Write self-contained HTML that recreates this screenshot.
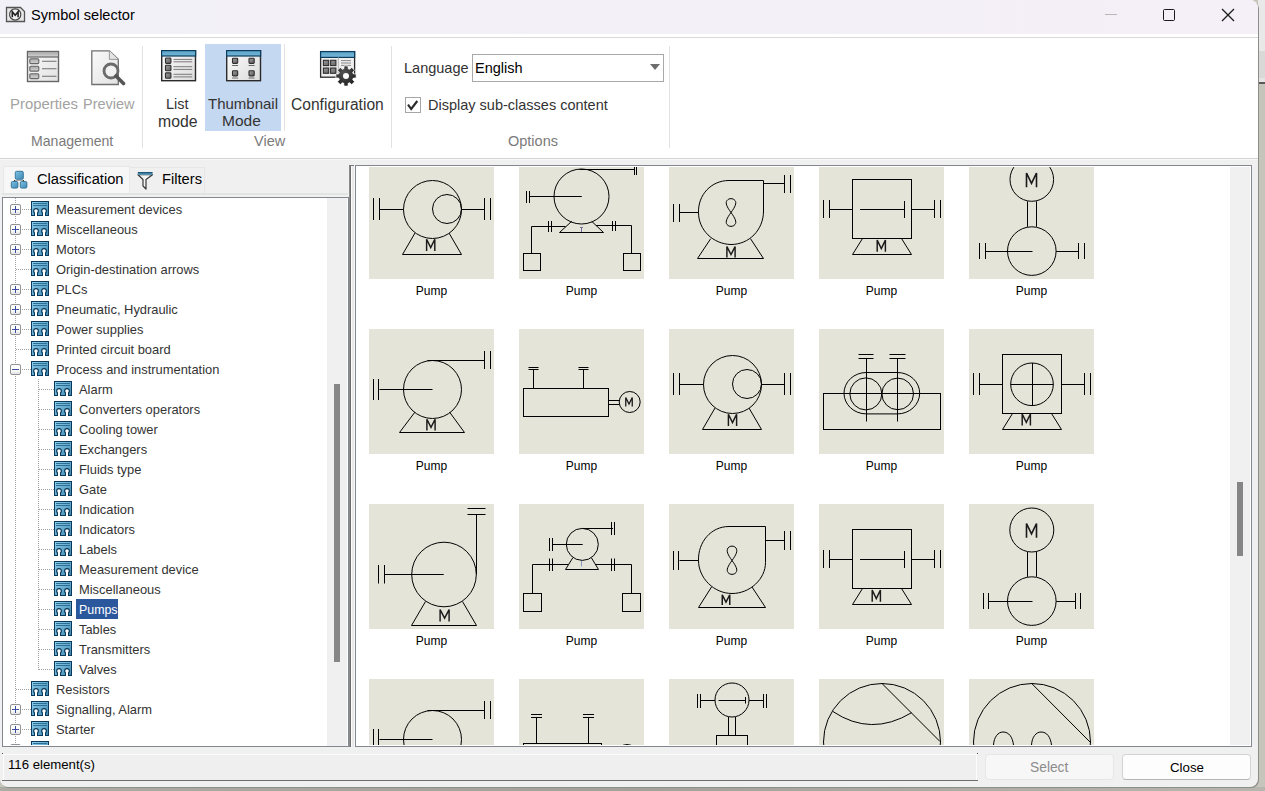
<!DOCTYPE html><html><head><meta charset="utf-8"><style>
*{margin:0;padding:0;box-sizing:border-box}
html,body{width:1265px;height:791px;overflow:hidden;background:#c5c5bb;font-family:"Liberation Sans",sans-serif}
.a{position:absolute}
.t{position:absolute;white-space:nowrap;line-height:1}
.sep{position:absolute;width:1px;background:#e2e2e2}
.rtxt{font-size:14.5px;color:#333}
.gtxt{font-size:14.5px;color:#7a7a7a}
.tr{position:absolute;white-space:nowrap;line-height:1;font-size:12.9px;color:#333}
.th{position:absolute;width:125px;height:125px;background:#e4e4d9}
.th svg{position:absolute;left:0;top:0}
.pl{position:absolute;width:125px;text-align:center;font-size:12px;line-height:1;color:#000}
</style></head><body>
<div class="a" style="left:1258px;top:0;width:7px;height:51px;background:#e9e9e9"></div>
<div class="a" style="left:1258px;top:51px;width:7px;height:27px;background:#d9d9d9"></div>
<div class="a" style="left:1258px;top:78px;width:7px;height:4px;background:#e5e5e5"></div>
<div class="a" style="left:1258px;top:82px;width:7px;height:2px;background:#5a5a5a"></div>
<div class="a" style="left:0;top:787px;width:1265px;height:4px;background:linear-gradient(to right,#acaca4,#a2a29a 50%,#b6b6ae)"></div>
<div class="a" style="left:0;top:0;width:1258px;height:787px;background:#f0f0f0;border-radius:0 8px 8px 8px;overflow:hidden;box-shadow:1px 1px 0 #8e8e88">
<div class="a" style="left:0;top:0;width:1258px;height:34px;background:linear-gradient(to right,#f2f1f7 0%,#f3f0f7 55%,#f5eff7 100%)"></div>
<div class="a" style="left:0;top:34px;width:1258px;height:125px;background:#fff;border-bottom:1px solid #d4d4d4"></div>
<div class="a" style="left:0;top:159px;width:1258px;height:1px;background:#f7f7f7"></div>
<div class="a" style="left:0;top:37px;width:1258px;height:1px;background:#d9d9d9"></div>
<svg class="a" style="left:5px;top:6px" width="21" height="17" viewBox="0 0 21 17">
<path d="M1.5 1.5H15.5L19.5 5.5V15.5H1.5Z" fill="#e8e8e8" stroke="#555" stroke-width="1.3"/>
<circle cx="10.2" cy="8.5" r="5.6" fill="#f2f2f2" stroke="#444" stroke-width="1.2"/>
<path d="M7.3 11.3V5.8L10.2 9.3L13.1 5.8V11.3" fill="none" stroke="#222" stroke-width="1.6"/>
</svg>
<div class="t" style="left:31px;top:8px;font-size:14.6px;color:#000">Symbol selector</div>
<div class="a" style="left:1105px;top:14px;width:12px;height:1px;background:#b8b8b8"></div>
<div class="a" style="left:1163px;top:9px;width:12px;height:12px;border:1.3px solid #1a1a1a;border-radius:1.5px"></div>
<svg class="a" style="left:1221px;top:8px" width="14" height="14"><path d="M1 1L13 13M13 1L1 13" stroke="#1a1a1a" stroke-width="1.3"/></svg>
<div class="sep" style="left:142px;top:46px;height:102px"></div>
<div class="sep" style="left:284px;top:44px;height:87px"></div>
<div class="sep" style="left:391px;top:46px;height:102px"></div>
<div class="sep" style="left:669px;top:46px;height:102px"></div>
<div class="a" style="left:205px;top:44px;width:76px;height:87px;background:#c5d8f2"></div>
<svg class="a" style="left:26px;top:50px" width="34" height="33" viewBox="0 0 34 33">
<defs><linearGradient id="gh" x1="0" y1="0" x2="0" y2="1"><stop offset="0" stop-color="#a8a8a8"/><stop offset="1" stop-color="#d4d4d4"/></linearGradient>
<linearGradient id="gb" x1="0" y1="0" x2="1" y2="1"><stop offset="0" stop-color="#fafafa"/><stop offset="1" stop-color="#e2e2e2"/></linearGradient></defs>
<rect x="1.5" y="1.5" width="31" height="30" fill="url(#gb)" stroke="#666" stroke-width="1.4"/>
<rect x="2" y="2" width="30" height="5" fill="url(#gh)"/><path d="M1.5 7H32.5" stroke="#666" stroke-width="1.2"/>
<rect x="3.8" y="8.8" width="9" height="4.8" rx="1" fill="url(#gh)" stroke="#666" stroke-width="1.1"/>
<rect x="3.8" y="16.3" width="9" height="4.8" rx="1" fill="url(#gh)" stroke="#666" stroke-width="1.1"/>
<rect x="3.8" y="23.8" width="9" height="4.8" rx="1" fill="url(#gh)" stroke="#666" stroke-width="1.1"/>
<path d="M16 11.3H30.5M16 18.8H30.5M16 26.3H30.5" stroke="#707070" stroke-width="1.1"/>
</svg>
<svg class="a" style="left:90px;top:49px" width="36" height="37" viewBox="0 0 36 37">
<path d="M1.8 1.8H19.4L28.3 10.4V35.5H1.8Z" fill="url(#gb)" stroke="#707070" stroke-width="1.3"/>
<path d="M19.4 1.8V10.4H28.3" fill="#e4e4e4" stroke="#999" stroke-width="1"/>
<circle cx="21" cy="22" r="7" fill="#f0f0f0" stroke="#6a6a6a" stroke-width="2.8"/>
<path d="M26 27L33.5 34.5" stroke="#555" stroke-width="3.6" stroke-linecap="round"/>
</svg>
<svg class="a" style="left:161px;top:50px" width="36" height="32" viewBox="0 0 36 32">
<defs><linearGradient id="bh161" x1="0" y1="0" x2="0" y2="1"><stop offset="0" stop-color="#5ba4c9"/><stop offset="1" stop-color="#74b6d6"/></linearGradient>
<linearGradient id="bb161" x1="0" y1="0" x2="1" y2="1"><stop offset="0" stop-color="#fbfbfb"/><stop offset="1" stop-color="#dcdcdc"/></linearGradient>
<linearGradient id="sq161" x1="0" y1="0" x2="1" y2="1"><stop offset="0" stop-color="#a0a0a0"/><stop offset="1" stop-color="#5e5e5e"/></linearGradient></defs>
<rect x="0.7" y="0.7" width="33.8" height="30" fill="url(#bb161)" stroke="#2a2a2a" stroke-width="1.4"/>
<rect x="0.6" y="0.6" width="34" height="5.4" fill="url(#bh161)" stroke="#0b3d5e" stroke-width="1.2"/>
<rect x="4.5" y="8" width="5.4" height="5.4" rx="0.8" fill="url(#sq161)" stroke="#2e2e2e" stroke-width="1.1"/><rect x="4.5" y="15.3" width="5.4" height="5.4" rx="0.8" fill="url(#sq161)" stroke="#2e2e2e" stroke-width="1.1"/><rect x="4.5" y="22.9" width="5.4" height="5.4" rx="0.8" fill="url(#sq161)" stroke="#2e2e2e" stroke-width="1.1"/><path d="M12.5 9.4H31.2" stroke="#7a7a7a" stroke-width="1"/><path d="M12.5 11.8H31.2" stroke="#7a7a7a" stroke-width="1"/><path d="M12.5 16.7H31.2" stroke="#7a7a7a" stroke-width="1"/><path d="M12.5 19.4H31.2" stroke="#7a7a7a" stroke-width="1"/><path d="M12.5 24.3H31.2" stroke="#7a7a7a" stroke-width="1"/><path d="M12.5 26.9H31.2" stroke="#7a7a7a" stroke-width="1"/></svg>
<svg class="a" style="left:226px;top:50px" width="36" height="32" viewBox="0 0 36 32">
<defs><linearGradient id="bh226" x1="0" y1="0" x2="0" y2="1"><stop offset="0" stop-color="#5ba4c9"/><stop offset="1" stop-color="#74b6d6"/></linearGradient>
<linearGradient id="bb226" x1="0" y1="0" x2="1" y2="1"><stop offset="0" stop-color="#fbfbfb"/><stop offset="1" stop-color="#dcdcdc"/></linearGradient>
<linearGradient id="sq226" x1="0" y1="0" x2="1" y2="1"><stop offset="0" stop-color="#a0a0a0"/><stop offset="1" stop-color="#5e5e5e"/></linearGradient></defs>
<rect x="0.7" y="0.7" width="33.8" height="30" fill="url(#bb226)" stroke="#2a2a2a" stroke-width="1.4"/>
<rect x="0.6" y="0.6" width="34" height="5.4" fill="url(#bh226)" stroke="#0b3d5e" stroke-width="1.2"/>
<rect x="6.5" y="8.2" width="5.2" height="5.2" rx="0.8" fill="url(#sq226)" stroke="#2e2e2e" stroke-width="1.1"/><path d="M6.1 15.5H12.1" stroke="#6a6a6a" stroke-width="1"/><rect x="6.5" y="20.7" width="5.2" height="5.2" rx="0.8" fill="url(#sq226)" stroke="#2e2e2e" stroke-width="1.1"/><path d="M6.1 28.0H12.1" stroke="#6a6a6a" stroke-width="1"/><rect x="23" y="8.2" width="5.2" height="5.2" rx="0.8" fill="url(#sq226)" stroke="#2e2e2e" stroke-width="1.1"/><path d="M22.6 15.5H28.6" stroke="#6a6a6a" stroke-width="1"/><rect x="23" y="20.7" width="5.2" height="5.2" rx="0.8" fill="url(#sq226)" stroke="#2e2e2e" stroke-width="1.1"/><path d="M22.6 28.0H28.6" stroke="#6a6a6a" stroke-width="1"/></svg>
<svg class="a" style="left:319px;top:50px" width="40" height="38" viewBox="0 0 40 38">
<defs><linearGradient id="ch" x1="0" y1="0" x2="0" y2="1"><stop offset="0" stop-color="#5aa3c8"/><stop offset="1" stop-color="#78b9d8"/></linearGradient>
<linearGradient id="cs" x1="0" y1="0" x2="1" y2="1"><stop offset="0" stop-color="#9a9a9a"/><stop offset="1" stop-color="#606060"/></linearGradient>
<radialGradient id="cg" cx="0.4" cy="0.35" r="0.7"><stop offset="0" stop-color="#555"/><stop offset="1" stop-color="#1e1e1e"/></radialGradient></defs>
<rect x="1.6" y="1.6" width="34" height="25.6" fill="#efefef" stroke="#2a2a2a" stroke-width="1.3"/>
<rect x="1.6" y="1.6" width="34" height="5.8" fill="url(#ch)" stroke="#0b3d5e" stroke-width="1.2"/>
<path d="M19.4 7.5V27.5" stroke="#bbb" stroke-width="1.2"/>
<rect x="4.4" y="10.3" width="5.3" height="5.3" fill="url(#cs)" stroke="#2e2e2e" stroke-width="1.1"/>
<rect x="11.6" y="10.3" width="5.3" height="5.3" fill="url(#cs)" stroke="#2e2e2e" stroke-width="1.1"/>
<rect x="4.4" y="18" width="5.3" height="5.3" fill="url(#cs)" stroke="#2e2e2e" stroke-width="1.1"/>
<rect x="11.6" y="18" width="5.3" height="5.3" fill="url(#cs)" stroke="#2e2e2e" stroke-width="1.1"/>
<path d="M22 10.6H32M22 13H32M22 15.4H32" stroke="#888" stroke-width="1"/>
<g transform="translate(27,26)">
<path fill="url(#cg)" d="M-2.12 -7.30L-2.01 -10.10L2.01 -10.10L2.12 -7.30L3.66 -6.66L5.72 -8.56L8.56 -5.72L6.66 -3.66L7.30 -2.12L10.10 -2.01L10.10 2.01L7.30 2.12L6.66 3.66L8.56 5.72L5.72 8.56L3.66 6.66L2.12 7.30L2.01 10.10L-2.01 10.10L-2.12 7.30L-3.66 6.66L-5.72 8.56L-8.56 5.72L-6.66 3.66L-7.30 2.12L-10.10 2.01L-10.10 -2.01L-7.30 -2.12L-6.66 -3.66L-8.56 -5.72L-5.72 -8.56L-3.66 -6.66Z" stroke="#fff" stroke-width="0.7" stroke-linejoin="round"/>
<circle cx="0" cy="0" r="3" fill="#fff"/>
</g>
</svg>
<div class="t rtxt" style="left:10px;top:97px;color:#a3a3a3;font-size:14.9px">Properties</div>
<div class="t rtxt" style="left:83px;top:97px;color:#a3a3a3">Preview</div>
<div class="t gtxt" style="left:31px;top:134px;font-size:14.1px">Management</div>
<div class="t rtxt" style="left:166px;top:97px">List</div>
<div class="t rtxt" style="left:158px;top:114px;font-size:15.8px">mode</div>
<div class="t rtxt" style="left:208px;top:96px;font-size:15px">Thumbnail</div>
<div class="t rtxt" style="left:222px;top:113px;font-size:15.5px">Mode</div>
<div class="t gtxt" style="left:254px;top:134px">View</div>
<div class="t rtxt" style="left:291px;top:97px;font-size:15.6px">Configuration</div>
<div class="t rtxt" style="left:404px;top:61px">Language</div>
<div class="a" style="left:472px;top:54px;width:192px;height:28px;border:1px solid #a9a9a9;background:#fff"></div>
<div class="t rtxt" style="left:475px;top:61px;color:#000">English</div>
<div class="a" style="left:650px;top:64px;width:0;height:0;border-left:5px solid transparent;border-right:5px solid transparent;border-top:6px solid #6d6d6d"></div>
<div class="a" style="left:405px;top:97px;width:16px;height:16px;border:1px solid #a6a6a6;background:#fff"></div>
<svg class="a" style="left:405px;top:97px" width="16" height="16"><path d="M3 7.6 L6.2 12 L12.3 4" fill="none" stroke="#2a2a2a" stroke-width="2.1"/></svg>
<div class="t rtxt" style="left:428px;top:98px">Display sub-classes content</div>
<div class="t gtxt" style="left:508px;top:134px">Options</div>
<div class="a" style="left:3px;top:166px;width:127px;height:27px;background:#f7f7f7;border:1px solid #e8e8e8;border-bottom:none"></div>
<div class="a" style="left:130px;top:167px;width:75px;height:26px;background:#f0f0f0;border:1px solid #e6e6e6;border-bottom:none;border-left:none"></div>
<div class="a" style="left:2px;top:193px;width:346px;height:2px;background:#e3e3e3"></div>
<svg class="a" style="left:10px;top:170px" width="18" height="19" viewBox="0 0 18 19">
<defs><linearGradient id="cb" x1="0" y1="0" x2="1" y2="1"><stop offset="0" stop-color="#7cc3e6"/><stop offset="1" stop-color="#3f88b2"/></linearGradient></defs>
<path d="M4.5 10.5H13.5" stroke="#aaa" stroke-width="1"/><path d="M4.5 10V11.5M13.5 10V11.5" stroke="#333" stroke-width="1"/>
<rect x="5.3" y="1.3" width="8" height="8" rx="1.3" fill="url(#cb)" stroke="#2f6f95" stroke-width="0.9"/>
<rect x="1.3" y="11.5" width="6.6" height="6.6" rx="1.3" fill="url(#cb)" stroke="#2f6f95" stroke-width="0.9"/>
<rect x="10.3" y="11.5" width="6.6" height="6.6" rx="1.3" fill="url(#cb)" stroke="#2f6f95" stroke-width="0.9"/>
</svg>
<div class="t" style="left:37px;top:172px;font-size:14.7px;color:#000">Classification</div>
<svg class="a" style="left:136px;top:171px" width="18" height="19" viewBox="0 0 18 19">
<defs><linearGradient id="fb" x1="0" y1="0" x2="0" y2="1"><stop offset="0" stop-color="#0e4466"/><stop offset="1" stop-color="#6ab4d8"/></linearGradient></defs>
<path d="M2 3.7L7 8.5V15L10 18V8.5L16.5 3.7Z" fill="#f5f5f5" stroke="#3a3a3a" stroke-width="1.2" stroke-linejoin="round"/>
<rect x="1.8" y="1" width="14.8" height="2.8" fill="url(#fb)"/>
</svg>
<div class="t" style="left:162px;top:172px;font-size:14.7px;color:#000">Filters</div>
<div class="a" style="left:2px;top:197px;width:347px;height:550px;background:#fff;border:1px solid #828790;overflow:hidden">
<svg width="0" height="0" style="position:absolute"><defs><linearGradient id="fg" x1="0" y1="0" x2="1" y2="1"><stop offset="0" stop-color="#8fd0ee"/><stop offset="1" stop-color="#3f86ae"/></linearGradient></defs></svg>
<div class="a" style="left:12px;top:0px;width:1px;height:562px;background:repeating-linear-gradient(to bottom,#a0a0a0 0 1px,transparent 1px 2px)"></div>
<div class="a" style="left:35px;top:181px;width:1px;height:291px;background:repeating-linear-gradient(to bottom,#a0a0a0 0 1px,transparent 1px 2px)"></div>
<div class="a" style="left:13px;top:11px;width:15px;height:1px;background:repeating-linear-gradient(to right,#a0a0a0 0 1px,transparent 1px 2px)"></div>
<div class="a" style="left:7px;top:6px;width:11px;height:11px;border:1px solid #919191;border-radius:2px;background:linear-gradient(#fff 55%,#e2e2e2)"></div>
<div class="a" style="left:9px;top:11px;width:7px;height:1px;background:#3b4ea0"></div>
<div class="a" style="left:12px;top:8px;width:1px;height:7px;background:#3b4ea0"></div>
<svg class="a" style="left:28px;top:3px" width="18" height="15" viewBox="0 0 18 15">
<rect x="0" y="0" width="18" height="15" fill="#08395a"/>
<rect x="1" y="1" width="16" height="13" fill="url(#fg)"/>
<rect x="2" y="2" width="14" height="1" fill="#2b6f96"/><rect x="2" y="4" width="14" height="1" fill="#2b6f96"/>
<circle cx="5" cy="10" r="2.9" fill="#08395a"/><rect x="3" y="10" width="4" height="5" fill="#08395a"/>
<circle cx="13" cy="10" r="2.9" fill="#08395a"/><rect x="11" y="10" width="4" height="5" fill="#08395a"/>
<circle cx="5" cy="10" r="1.8" fill="#fff"/><rect x="4" y="10" width="2" height="5" fill="#fff"/>
<circle cx="13" cy="10" r="1.8" fill="#fff"/><rect x="12" y="10" width="2" height="5" fill="#fff"/>
</svg>
<div class="tr" style="left:53px;top:6px">Measurement devices</div>
<div class="a" style="left:13px;top:31px;width:15px;height:1px;background:repeating-linear-gradient(to right,#a0a0a0 0 1px,transparent 1px 2px)"></div>
<div class="a" style="left:7px;top:26px;width:11px;height:11px;border:1px solid #919191;border-radius:2px;background:linear-gradient(#fff 55%,#e2e2e2)"></div>
<div class="a" style="left:9px;top:31px;width:7px;height:1px;background:#3b4ea0"></div>
<div class="a" style="left:12px;top:28px;width:1px;height:7px;background:#3b4ea0"></div>
<svg class="a" style="left:28px;top:23px" width="18" height="15" viewBox="0 0 18 15">
<rect x="0" y="0" width="18" height="15" fill="#08395a"/>
<rect x="1" y="1" width="16" height="13" fill="url(#fg)"/>
<rect x="2" y="2" width="14" height="1" fill="#2b6f96"/><rect x="2" y="4" width="14" height="1" fill="#2b6f96"/>
<circle cx="5" cy="10" r="2.9" fill="#08395a"/><rect x="3" y="10" width="4" height="5" fill="#08395a"/>
<circle cx="13" cy="10" r="2.9" fill="#08395a"/><rect x="11" y="10" width="4" height="5" fill="#08395a"/>
<circle cx="5" cy="10" r="1.8" fill="#fff"/><rect x="4" y="10" width="2" height="5" fill="#fff"/>
<circle cx="13" cy="10" r="1.8" fill="#fff"/><rect x="12" y="10" width="2" height="5" fill="#fff"/>
</svg>
<div class="tr" style="left:53px;top:26px">Miscellaneous</div>
<div class="a" style="left:13px;top:51px;width:15px;height:1px;background:repeating-linear-gradient(to right,#a0a0a0 0 1px,transparent 1px 2px)"></div>
<div class="a" style="left:7px;top:46px;width:11px;height:11px;border:1px solid #919191;border-radius:2px;background:linear-gradient(#fff 55%,#e2e2e2)"></div>
<div class="a" style="left:9px;top:51px;width:7px;height:1px;background:#3b4ea0"></div>
<div class="a" style="left:12px;top:48px;width:1px;height:7px;background:#3b4ea0"></div>
<svg class="a" style="left:28px;top:43px" width="18" height="15" viewBox="0 0 18 15">
<rect x="0" y="0" width="18" height="15" fill="#08395a"/>
<rect x="1" y="1" width="16" height="13" fill="url(#fg)"/>
<rect x="2" y="2" width="14" height="1" fill="#2b6f96"/><rect x="2" y="4" width="14" height="1" fill="#2b6f96"/>
<circle cx="5" cy="10" r="2.9" fill="#08395a"/><rect x="3" y="10" width="4" height="5" fill="#08395a"/>
<circle cx="13" cy="10" r="2.9" fill="#08395a"/><rect x="11" y="10" width="4" height="5" fill="#08395a"/>
<circle cx="5" cy="10" r="1.8" fill="#fff"/><rect x="4" y="10" width="2" height="5" fill="#fff"/>
<circle cx="13" cy="10" r="1.8" fill="#fff"/><rect x="12" y="10" width="2" height="5" fill="#fff"/>
</svg>
<div class="tr" style="left:53px;top:46px">Motors</div>
<div class="a" style="left:13px;top:71px;width:15px;height:1px;background:repeating-linear-gradient(to right,#a0a0a0 0 1px,transparent 1px 2px)"></div>
<svg class="a" style="left:28px;top:63px" width="18" height="15" viewBox="0 0 18 15">
<rect x="0" y="0" width="18" height="15" fill="#08395a"/>
<rect x="1" y="1" width="16" height="13" fill="url(#fg)"/>
<rect x="2" y="2" width="14" height="1" fill="#2b6f96"/><rect x="2" y="4" width="14" height="1" fill="#2b6f96"/>
<circle cx="5" cy="10" r="2.9" fill="#08395a"/><rect x="3" y="10" width="4" height="5" fill="#08395a"/>
<circle cx="13" cy="10" r="2.9" fill="#08395a"/><rect x="11" y="10" width="4" height="5" fill="#08395a"/>
<circle cx="5" cy="10" r="1.8" fill="#fff"/><rect x="4" y="10" width="2" height="5" fill="#fff"/>
<circle cx="13" cy="10" r="1.8" fill="#fff"/><rect x="12" y="10" width="2" height="5" fill="#fff"/>
</svg>
<div class="tr" style="left:53px;top:66px">Origin-destination arrows</div>
<div class="a" style="left:13px;top:91px;width:15px;height:1px;background:repeating-linear-gradient(to right,#a0a0a0 0 1px,transparent 1px 2px)"></div>
<div class="a" style="left:7px;top:86px;width:11px;height:11px;border:1px solid #919191;border-radius:2px;background:linear-gradient(#fff 55%,#e2e2e2)"></div>
<div class="a" style="left:9px;top:91px;width:7px;height:1px;background:#3b4ea0"></div>
<div class="a" style="left:12px;top:88px;width:1px;height:7px;background:#3b4ea0"></div>
<svg class="a" style="left:28px;top:83px" width="18" height="15" viewBox="0 0 18 15">
<rect x="0" y="0" width="18" height="15" fill="#08395a"/>
<rect x="1" y="1" width="16" height="13" fill="url(#fg)"/>
<rect x="2" y="2" width="14" height="1" fill="#2b6f96"/><rect x="2" y="4" width="14" height="1" fill="#2b6f96"/>
<circle cx="5" cy="10" r="2.9" fill="#08395a"/><rect x="3" y="10" width="4" height="5" fill="#08395a"/>
<circle cx="13" cy="10" r="2.9" fill="#08395a"/><rect x="11" y="10" width="4" height="5" fill="#08395a"/>
<circle cx="5" cy="10" r="1.8" fill="#fff"/><rect x="4" y="10" width="2" height="5" fill="#fff"/>
<circle cx="13" cy="10" r="1.8" fill="#fff"/><rect x="12" y="10" width="2" height="5" fill="#fff"/>
</svg>
<div class="tr" style="left:53px;top:86px">PLCs</div>
<div class="a" style="left:13px;top:111px;width:15px;height:1px;background:repeating-linear-gradient(to right,#a0a0a0 0 1px,transparent 1px 2px)"></div>
<div class="a" style="left:7px;top:106px;width:11px;height:11px;border:1px solid #919191;border-radius:2px;background:linear-gradient(#fff 55%,#e2e2e2)"></div>
<div class="a" style="left:9px;top:111px;width:7px;height:1px;background:#3b4ea0"></div>
<div class="a" style="left:12px;top:108px;width:1px;height:7px;background:#3b4ea0"></div>
<svg class="a" style="left:28px;top:103px" width="18" height="15" viewBox="0 0 18 15">
<rect x="0" y="0" width="18" height="15" fill="#08395a"/>
<rect x="1" y="1" width="16" height="13" fill="url(#fg)"/>
<rect x="2" y="2" width="14" height="1" fill="#2b6f96"/><rect x="2" y="4" width="14" height="1" fill="#2b6f96"/>
<circle cx="5" cy="10" r="2.9" fill="#08395a"/><rect x="3" y="10" width="4" height="5" fill="#08395a"/>
<circle cx="13" cy="10" r="2.9" fill="#08395a"/><rect x="11" y="10" width="4" height="5" fill="#08395a"/>
<circle cx="5" cy="10" r="1.8" fill="#fff"/><rect x="4" y="10" width="2" height="5" fill="#fff"/>
<circle cx="13" cy="10" r="1.8" fill="#fff"/><rect x="12" y="10" width="2" height="5" fill="#fff"/>
</svg>
<div class="tr" style="left:53px;top:106px">Pneumatic, Hydraulic</div>
<div class="a" style="left:13px;top:131px;width:15px;height:1px;background:repeating-linear-gradient(to right,#a0a0a0 0 1px,transparent 1px 2px)"></div>
<div class="a" style="left:7px;top:126px;width:11px;height:11px;border:1px solid #919191;border-radius:2px;background:linear-gradient(#fff 55%,#e2e2e2)"></div>
<div class="a" style="left:9px;top:131px;width:7px;height:1px;background:#3b4ea0"></div>
<div class="a" style="left:12px;top:128px;width:1px;height:7px;background:#3b4ea0"></div>
<svg class="a" style="left:28px;top:123px" width="18" height="15" viewBox="0 0 18 15">
<rect x="0" y="0" width="18" height="15" fill="#08395a"/>
<rect x="1" y="1" width="16" height="13" fill="url(#fg)"/>
<rect x="2" y="2" width="14" height="1" fill="#2b6f96"/><rect x="2" y="4" width="14" height="1" fill="#2b6f96"/>
<circle cx="5" cy="10" r="2.9" fill="#08395a"/><rect x="3" y="10" width="4" height="5" fill="#08395a"/>
<circle cx="13" cy="10" r="2.9" fill="#08395a"/><rect x="11" y="10" width="4" height="5" fill="#08395a"/>
<circle cx="5" cy="10" r="1.8" fill="#fff"/><rect x="4" y="10" width="2" height="5" fill="#fff"/>
<circle cx="13" cy="10" r="1.8" fill="#fff"/><rect x="12" y="10" width="2" height="5" fill="#fff"/>
</svg>
<div class="tr" style="left:53px;top:126px">Power supplies</div>
<div class="a" style="left:13px;top:151px;width:15px;height:1px;background:repeating-linear-gradient(to right,#a0a0a0 0 1px,transparent 1px 2px)"></div>
<svg class="a" style="left:28px;top:143px" width="18" height="15" viewBox="0 0 18 15">
<rect x="0" y="0" width="18" height="15" fill="#08395a"/>
<rect x="1" y="1" width="16" height="13" fill="url(#fg)"/>
<rect x="2" y="2" width="14" height="1" fill="#2b6f96"/><rect x="2" y="4" width="14" height="1" fill="#2b6f96"/>
<circle cx="5" cy="10" r="2.9" fill="#08395a"/><rect x="3" y="10" width="4" height="5" fill="#08395a"/>
<circle cx="13" cy="10" r="2.9" fill="#08395a"/><rect x="11" y="10" width="4" height="5" fill="#08395a"/>
<circle cx="5" cy="10" r="1.8" fill="#fff"/><rect x="4" y="10" width="2" height="5" fill="#fff"/>
<circle cx="13" cy="10" r="1.8" fill="#fff"/><rect x="12" y="10" width="2" height="5" fill="#fff"/>
</svg>
<div class="tr" style="left:53px;top:146px">Printed circuit board</div>
<div class="a" style="left:13px;top:171px;width:15px;height:1px;background:repeating-linear-gradient(to right,#a0a0a0 0 1px,transparent 1px 2px)"></div>
<div class="a" style="left:7px;top:166px;width:11px;height:11px;border:1px solid #919191;border-radius:2px;background:linear-gradient(#fff 55%,#e2e2e2)"></div>
<div class="a" style="left:9px;top:171px;width:7px;height:1px;background:#3b4ea0"></div>
<svg class="a" style="left:28px;top:163px" width="18" height="15" viewBox="0 0 18 15">
<rect x="0" y="0" width="18" height="15" fill="#08395a"/>
<rect x="1" y="1" width="16" height="13" fill="url(#fg)"/>
<rect x="2" y="2" width="14" height="1" fill="#2b6f96"/><rect x="2" y="4" width="14" height="1" fill="#2b6f96"/>
<circle cx="5" cy="10" r="2.9" fill="#08395a"/><rect x="3" y="10" width="4" height="5" fill="#08395a"/>
<circle cx="13" cy="10" r="2.9" fill="#08395a"/><rect x="11" y="10" width="4" height="5" fill="#08395a"/>
<circle cx="5" cy="10" r="1.8" fill="#fff"/><rect x="4" y="10" width="2" height="5" fill="#fff"/>
<circle cx="13" cy="10" r="1.8" fill="#fff"/><rect x="12" y="10" width="2" height="5" fill="#fff"/>
</svg>
<div class="tr" style="left:53px;top:166px">Process and instrumentation</div>
<div class="a" style="left:36px;top:191px;width:15px;height:1px;background:repeating-linear-gradient(to right,#a0a0a0 0 1px,transparent 1px 2px)"></div>
<svg class="a" style="left:51px;top:183px" width="18" height="15" viewBox="0 0 18 15">
<rect x="0" y="0" width="18" height="15" fill="#08395a"/>
<rect x="1" y="1" width="16" height="13" fill="url(#fg)"/>
<rect x="2" y="2" width="14" height="1" fill="#2b6f96"/><rect x="2" y="4" width="14" height="1" fill="#2b6f96"/>
<circle cx="5" cy="10" r="2.9" fill="#08395a"/><rect x="3" y="10" width="4" height="5" fill="#08395a"/>
<circle cx="13" cy="10" r="2.9" fill="#08395a"/><rect x="11" y="10" width="4" height="5" fill="#08395a"/>
<circle cx="5" cy="10" r="1.8" fill="#fff"/><rect x="4" y="10" width="2" height="5" fill="#fff"/>
<circle cx="13" cy="10" r="1.8" fill="#fff"/><rect x="12" y="10" width="2" height="5" fill="#fff"/>
</svg>
<div class="tr" style="left:76px;top:186px">Alarm</div>
<div class="a" style="left:36px;top:211px;width:15px;height:1px;background:repeating-linear-gradient(to right,#a0a0a0 0 1px,transparent 1px 2px)"></div>
<svg class="a" style="left:51px;top:203px" width="18" height="15" viewBox="0 0 18 15">
<rect x="0" y="0" width="18" height="15" fill="#08395a"/>
<rect x="1" y="1" width="16" height="13" fill="url(#fg)"/>
<rect x="2" y="2" width="14" height="1" fill="#2b6f96"/><rect x="2" y="4" width="14" height="1" fill="#2b6f96"/>
<circle cx="5" cy="10" r="2.9" fill="#08395a"/><rect x="3" y="10" width="4" height="5" fill="#08395a"/>
<circle cx="13" cy="10" r="2.9" fill="#08395a"/><rect x="11" y="10" width="4" height="5" fill="#08395a"/>
<circle cx="5" cy="10" r="1.8" fill="#fff"/><rect x="4" y="10" width="2" height="5" fill="#fff"/>
<circle cx="13" cy="10" r="1.8" fill="#fff"/><rect x="12" y="10" width="2" height="5" fill="#fff"/>
</svg>
<div class="tr" style="left:76px;top:206px">Converters operators</div>
<div class="a" style="left:36px;top:231px;width:15px;height:1px;background:repeating-linear-gradient(to right,#a0a0a0 0 1px,transparent 1px 2px)"></div>
<svg class="a" style="left:51px;top:223px" width="18" height="15" viewBox="0 0 18 15">
<rect x="0" y="0" width="18" height="15" fill="#08395a"/>
<rect x="1" y="1" width="16" height="13" fill="url(#fg)"/>
<rect x="2" y="2" width="14" height="1" fill="#2b6f96"/><rect x="2" y="4" width="14" height="1" fill="#2b6f96"/>
<circle cx="5" cy="10" r="2.9" fill="#08395a"/><rect x="3" y="10" width="4" height="5" fill="#08395a"/>
<circle cx="13" cy="10" r="2.9" fill="#08395a"/><rect x="11" y="10" width="4" height="5" fill="#08395a"/>
<circle cx="5" cy="10" r="1.8" fill="#fff"/><rect x="4" y="10" width="2" height="5" fill="#fff"/>
<circle cx="13" cy="10" r="1.8" fill="#fff"/><rect x="12" y="10" width="2" height="5" fill="#fff"/>
</svg>
<div class="tr" style="left:76px;top:226px">Cooling tower</div>
<div class="a" style="left:36px;top:251px;width:15px;height:1px;background:repeating-linear-gradient(to right,#a0a0a0 0 1px,transparent 1px 2px)"></div>
<svg class="a" style="left:51px;top:243px" width="18" height="15" viewBox="0 0 18 15">
<rect x="0" y="0" width="18" height="15" fill="#08395a"/>
<rect x="1" y="1" width="16" height="13" fill="url(#fg)"/>
<rect x="2" y="2" width="14" height="1" fill="#2b6f96"/><rect x="2" y="4" width="14" height="1" fill="#2b6f96"/>
<circle cx="5" cy="10" r="2.9" fill="#08395a"/><rect x="3" y="10" width="4" height="5" fill="#08395a"/>
<circle cx="13" cy="10" r="2.9" fill="#08395a"/><rect x="11" y="10" width="4" height="5" fill="#08395a"/>
<circle cx="5" cy="10" r="1.8" fill="#fff"/><rect x="4" y="10" width="2" height="5" fill="#fff"/>
<circle cx="13" cy="10" r="1.8" fill="#fff"/><rect x="12" y="10" width="2" height="5" fill="#fff"/>
</svg>
<div class="tr" style="left:76px;top:246px">Exchangers</div>
<div class="a" style="left:36px;top:271px;width:15px;height:1px;background:repeating-linear-gradient(to right,#a0a0a0 0 1px,transparent 1px 2px)"></div>
<svg class="a" style="left:51px;top:263px" width="18" height="15" viewBox="0 0 18 15">
<rect x="0" y="0" width="18" height="15" fill="#08395a"/>
<rect x="1" y="1" width="16" height="13" fill="url(#fg)"/>
<rect x="2" y="2" width="14" height="1" fill="#2b6f96"/><rect x="2" y="4" width="14" height="1" fill="#2b6f96"/>
<circle cx="5" cy="10" r="2.9" fill="#08395a"/><rect x="3" y="10" width="4" height="5" fill="#08395a"/>
<circle cx="13" cy="10" r="2.9" fill="#08395a"/><rect x="11" y="10" width="4" height="5" fill="#08395a"/>
<circle cx="5" cy="10" r="1.8" fill="#fff"/><rect x="4" y="10" width="2" height="5" fill="#fff"/>
<circle cx="13" cy="10" r="1.8" fill="#fff"/><rect x="12" y="10" width="2" height="5" fill="#fff"/>
</svg>
<div class="tr" style="left:76px;top:266px">Fluids type</div>
<div class="a" style="left:36px;top:291px;width:15px;height:1px;background:repeating-linear-gradient(to right,#a0a0a0 0 1px,transparent 1px 2px)"></div>
<svg class="a" style="left:51px;top:283px" width="18" height="15" viewBox="0 0 18 15">
<rect x="0" y="0" width="18" height="15" fill="#08395a"/>
<rect x="1" y="1" width="16" height="13" fill="url(#fg)"/>
<rect x="2" y="2" width="14" height="1" fill="#2b6f96"/><rect x="2" y="4" width="14" height="1" fill="#2b6f96"/>
<circle cx="5" cy="10" r="2.9" fill="#08395a"/><rect x="3" y="10" width="4" height="5" fill="#08395a"/>
<circle cx="13" cy="10" r="2.9" fill="#08395a"/><rect x="11" y="10" width="4" height="5" fill="#08395a"/>
<circle cx="5" cy="10" r="1.8" fill="#fff"/><rect x="4" y="10" width="2" height="5" fill="#fff"/>
<circle cx="13" cy="10" r="1.8" fill="#fff"/><rect x="12" y="10" width="2" height="5" fill="#fff"/>
</svg>
<div class="tr" style="left:76px;top:286px">Gate</div>
<div class="a" style="left:36px;top:311px;width:15px;height:1px;background:repeating-linear-gradient(to right,#a0a0a0 0 1px,transparent 1px 2px)"></div>
<svg class="a" style="left:51px;top:303px" width="18" height="15" viewBox="0 0 18 15">
<rect x="0" y="0" width="18" height="15" fill="#08395a"/>
<rect x="1" y="1" width="16" height="13" fill="url(#fg)"/>
<rect x="2" y="2" width="14" height="1" fill="#2b6f96"/><rect x="2" y="4" width="14" height="1" fill="#2b6f96"/>
<circle cx="5" cy="10" r="2.9" fill="#08395a"/><rect x="3" y="10" width="4" height="5" fill="#08395a"/>
<circle cx="13" cy="10" r="2.9" fill="#08395a"/><rect x="11" y="10" width="4" height="5" fill="#08395a"/>
<circle cx="5" cy="10" r="1.8" fill="#fff"/><rect x="4" y="10" width="2" height="5" fill="#fff"/>
<circle cx="13" cy="10" r="1.8" fill="#fff"/><rect x="12" y="10" width="2" height="5" fill="#fff"/>
</svg>
<div class="tr" style="left:76px;top:306px">Indication</div>
<div class="a" style="left:36px;top:331px;width:15px;height:1px;background:repeating-linear-gradient(to right,#a0a0a0 0 1px,transparent 1px 2px)"></div>
<svg class="a" style="left:51px;top:323px" width="18" height="15" viewBox="0 0 18 15">
<rect x="0" y="0" width="18" height="15" fill="#08395a"/>
<rect x="1" y="1" width="16" height="13" fill="url(#fg)"/>
<rect x="2" y="2" width="14" height="1" fill="#2b6f96"/><rect x="2" y="4" width="14" height="1" fill="#2b6f96"/>
<circle cx="5" cy="10" r="2.9" fill="#08395a"/><rect x="3" y="10" width="4" height="5" fill="#08395a"/>
<circle cx="13" cy="10" r="2.9" fill="#08395a"/><rect x="11" y="10" width="4" height="5" fill="#08395a"/>
<circle cx="5" cy="10" r="1.8" fill="#fff"/><rect x="4" y="10" width="2" height="5" fill="#fff"/>
<circle cx="13" cy="10" r="1.8" fill="#fff"/><rect x="12" y="10" width="2" height="5" fill="#fff"/>
</svg>
<div class="tr" style="left:76px;top:326px">Indicators</div>
<div class="a" style="left:36px;top:351px;width:15px;height:1px;background:repeating-linear-gradient(to right,#a0a0a0 0 1px,transparent 1px 2px)"></div>
<svg class="a" style="left:51px;top:343px" width="18" height="15" viewBox="0 0 18 15">
<rect x="0" y="0" width="18" height="15" fill="#08395a"/>
<rect x="1" y="1" width="16" height="13" fill="url(#fg)"/>
<rect x="2" y="2" width="14" height="1" fill="#2b6f96"/><rect x="2" y="4" width="14" height="1" fill="#2b6f96"/>
<circle cx="5" cy="10" r="2.9" fill="#08395a"/><rect x="3" y="10" width="4" height="5" fill="#08395a"/>
<circle cx="13" cy="10" r="2.9" fill="#08395a"/><rect x="11" y="10" width="4" height="5" fill="#08395a"/>
<circle cx="5" cy="10" r="1.8" fill="#fff"/><rect x="4" y="10" width="2" height="5" fill="#fff"/>
<circle cx="13" cy="10" r="1.8" fill="#fff"/><rect x="12" y="10" width="2" height="5" fill="#fff"/>
</svg>
<div class="tr" style="left:76px;top:346px">Labels</div>
<div class="a" style="left:36px;top:371px;width:15px;height:1px;background:repeating-linear-gradient(to right,#a0a0a0 0 1px,transparent 1px 2px)"></div>
<svg class="a" style="left:51px;top:363px" width="18" height="15" viewBox="0 0 18 15">
<rect x="0" y="0" width="18" height="15" fill="#08395a"/>
<rect x="1" y="1" width="16" height="13" fill="url(#fg)"/>
<rect x="2" y="2" width="14" height="1" fill="#2b6f96"/><rect x="2" y="4" width="14" height="1" fill="#2b6f96"/>
<circle cx="5" cy="10" r="2.9" fill="#08395a"/><rect x="3" y="10" width="4" height="5" fill="#08395a"/>
<circle cx="13" cy="10" r="2.9" fill="#08395a"/><rect x="11" y="10" width="4" height="5" fill="#08395a"/>
<circle cx="5" cy="10" r="1.8" fill="#fff"/><rect x="4" y="10" width="2" height="5" fill="#fff"/>
<circle cx="13" cy="10" r="1.8" fill="#fff"/><rect x="12" y="10" width="2" height="5" fill="#fff"/>
</svg>
<div class="tr" style="left:76px;top:366px">Measurement device</div>
<div class="a" style="left:36px;top:391px;width:15px;height:1px;background:repeating-linear-gradient(to right,#a0a0a0 0 1px,transparent 1px 2px)"></div>
<svg class="a" style="left:51px;top:383px" width="18" height="15" viewBox="0 0 18 15">
<rect x="0" y="0" width="18" height="15" fill="#08395a"/>
<rect x="1" y="1" width="16" height="13" fill="url(#fg)"/>
<rect x="2" y="2" width="14" height="1" fill="#2b6f96"/><rect x="2" y="4" width="14" height="1" fill="#2b6f96"/>
<circle cx="5" cy="10" r="2.9" fill="#08395a"/><rect x="3" y="10" width="4" height="5" fill="#08395a"/>
<circle cx="13" cy="10" r="2.9" fill="#08395a"/><rect x="11" y="10" width="4" height="5" fill="#08395a"/>
<circle cx="5" cy="10" r="1.8" fill="#fff"/><rect x="4" y="10" width="2" height="5" fill="#fff"/>
<circle cx="13" cy="10" r="1.8" fill="#fff"/><rect x="12" y="10" width="2" height="5" fill="#fff"/>
</svg>
<div class="tr" style="left:76px;top:386px">Miscellaneous</div>
<div class="a" style="left:36px;top:411px;width:15px;height:1px;background:repeating-linear-gradient(to right,#a0a0a0 0 1px,transparent 1px 2px)"></div>
<svg class="a" style="left:51px;top:403px" width="18" height="15" viewBox="0 0 18 15">
<rect x="0" y="0" width="18" height="15" fill="#08395a"/>
<rect x="1" y="1" width="16" height="13" fill="url(#fg)"/>
<rect x="2" y="2" width="14" height="1" fill="#2b6f96"/><rect x="2" y="4" width="14" height="1" fill="#2b6f96"/>
<circle cx="5" cy="10" r="2.9" fill="#08395a"/><rect x="3" y="10" width="4" height="5" fill="#08395a"/>
<circle cx="13" cy="10" r="2.9" fill="#08395a"/><rect x="11" y="10" width="4" height="5" fill="#08395a"/>
<circle cx="5" cy="10" r="1.8" fill="#fff"/><rect x="4" y="10" width="2" height="5" fill="#fff"/>
<circle cx="13" cy="10" r="1.8" fill="#fff"/><rect x="12" y="10" width="2" height="5" fill="#fff"/>
</svg>
<div class="a" style="left:73px;top:401px;width:42px;height:20px;background:#2b579d"></div>
<div class="tr" style="left:76px;top:406px;color:#fff;font-size:12.4px">Pumps</div>
<div class="a" style="left:36px;top:431px;width:15px;height:1px;background:repeating-linear-gradient(to right,#a0a0a0 0 1px,transparent 1px 2px)"></div>
<svg class="a" style="left:51px;top:423px" width="18" height="15" viewBox="0 0 18 15">
<rect x="0" y="0" width="18" height="15" fill="#08395a"/>
<rect x="1" y="1" width="16" height="13" fill="url(#fg)"/>
<rect x="2" y="2" width="14" height="1" fill="#2b6f96"/><rect x="2" y="4" width="14" height="1" fill="#2b6f96"/>
<circle cx="5" cy="10" r="2.9" fill="#08395a"/><rect x="3" y="10" width="4" height="5" fill="#08395a"/>
<circle cx="13" cy="10" r="2.9" fill="#08395a"/><rect x="11" y="10" width="4" height="5" fill="#08395a"/>
<circle cx="5" cy="10" r="1.8" fill="#fff"/><rect x="4" y="10" width="2" height="5" fill="#fff"/>
<circle cx="13" cy="10" r="1.8" fill="#fff"/><rect x="12" y="10" width="2" height="5" fill="#fff"/>
</svg>
<div class="tr" style="left:76px;top:426px">Tables</div>
<div class="a" style="left:36px;top:451px;width:15px;height:1px;background:repeating-linear-gradient(to right,#a0a0a0 0 1px,transparent 1px 2px)"></div>
<svg class="a" style="left:51px;top:443px" width="18" height="15" viewBox="0 0 18 15">
<rect x="0" y="0" width="18" height="15" fill="#08395a"/>
<rect x="1" y="1" width="16" height="13" fill="url(#fg)"/>
<rect x="2" y="2" width="14" height="1" fill="#2b6f96"/><rect x="2" y="4" width="14" height="1" fill="#2b6f96"/>
<circle cx="5" cy="10" r="2.9" fill="#08395a"/><rect x="3" y="10" width="4" height="5" fill="#08395a"/>
<circle cx="13" cy="10" r="2.9" fill="#08395a"/><rect x="11" y="10" width="4" height="5" fill="#08395a"/>
<circle cx="5" cy="10" r="1.8" fill="#fff"/><rect x="4" y="10" width="2" height="5" fill="#fff"/>
<circle cx="13" cy="10" r="1.8" fill="#fff"/><rect x="12" y="10" width="2" height="5" fill="#fff"/>
</svg>
<div class="tr" style="left:76px;top:446px">Transmitters</div>
<div class="a" style="left:36px;top:471px;width:15px;height:1px;background:repeating-linear-gradient(to right,#a0a0a0 0 1px,transparent 1px 2px)"></div>
<svg class="a" style="left:51px;top:463px" width="18" height="15" viewBox="0 0 18 15">
<rect x="0" y="0" width="18" height="15" fill="#08395a"/>
<rect x="1" y="1" width="16" height="13" fill="url(#fg)"/>
<rect x="2" y="2" width="14" height="1" fill="#2b6f96"/><rect x="2" y="4" width="14" height="1" fill="#2b6f96"/>
<circle cx="5" cy="10" r="2.9" fill="#08395a"/><rect x="3" y="10" width="4" height="5" fill="#08395a"/>
<circle cx="13" cy="10" r="2.9" fill="#08395a"/><rect x="11" y="10" width="4" height="5" fill="#08395a"/>
<circle cx="5" cy="10" r="1.8" fill="#fff"/><rect x="4" y="10" width="2" height="5" fill="#fff"/>
<circle cx="13" cy="10" r="1.8" fill="#fff"/><rect x="12" y="10" width="2" height="5" fill="#fff"/>
</svg>
<div class="tr" style="left:76px;top:466px">Valves</div>
<div class="a" style="left:13px;top:491px;width:15px;height:1px;background:repeating-linear-gradient(to right,#a0a0a0 0 1px,transparent 1px 2px)"></div>
<svg class="a" style="left:28px;top:483px" width="18" height="15" viewBox="0 0 18 15">
<rect x="0" y="0" width="18" height="15" fill="#08395a"/>
<rect x="1" y="1" width="16" height="13" fill="url(#fg)"/>
<rect x="2" y="2" width="14" height="1" fill="#2b6f96"/><rect x="2" y="4" width="14" height="1" fill="#2b6f96"/>
<circle cx="5" cy="10" r="2.9" fill="#08395a"/><rect x="3" y="10" width="4" height="5" fill="#08395a"/>
<circle cx="13" cy="10" r="2.9" fill="#08395a"/><rect x="11" y="10" width="4" height="5" fill="#08395a"/>
<circle cx="5" cy="10" r="1.8" fill="#fff"/><rect x="4" y="10" width="2" height="5" fill="#fff"/>
<circle cx="13" cy="10" r="1.8" fill="#fff"/><rect x="12" y="10" width="2" height="5" fill="#fff"/>
</svg>
<div class="tr" style="left:53px;top:486px">Resistors</div>
<div class="a" style="left:13px;top:511px;width:15px;height:1px;background:repeating-linear-gradient(to right,#a0a0a0 0 1px,transparent 1px 2px)"></div>
<div class="a" style="left:7px;top:506px;width:11px;height:11px;border:1px solid #919191;border-radius:2px;background:linear-gradient(#fff 55%,#e2e2e2)"></div>
<div class="a" style="left:9px;top:511px;width:7px;height:1px;background:#3b4ea0"></div>
<div class="a" style="left:12px;top:508px;width:1px;height:7px;background:#3b4ea0"></div>
<svg class="a" style="left:28px;top:503px" width="18" height="15" viewBox="0 0 18 15">
<rect x="0" y="0" width="18" height="15" fill="#08395a"/>
<rect x="1" y="1" width="16" height="13" fill="url(#fg)"/>
<rect x="2" y="2" width="14" height="1" fill="#2b6f96"/><rect x="2" y="4" width="14" height="1" fill="#2b6f96"/>
<circle cx="5" cy="10" r="2.9" fill="#08395a"/><rect x="3" y="10" width="4" height="5" fill="#08395a"/>
<circle cx="13" cy="10" r="2.9" fill="#08395a"/><rect x="11" y="10" width="4" height="5" fill="#08395a"/>
<circle cx="5" cy="10" r="1.8" fill="#fff"/><rect x="4" y="10" width="2" height="5" fill="#fff"/>
<circle cx="13" cy="10" r="1.8" fill="#fff"/><rect x="12" y="10" width="2" height="5" fill="#fff"/>
</svg>
<div class="tr" style="left:53px;top:506px">Signalling, Alarm</div>
<div class="a" style="left:13px;top:531px;width:15px;height:1px;background:repeating-linear-gradient(to right,#a0a0a0 0 1px,transparent 1px 2px)"></div>
<div class="a" style="left:7px;top:526px;width:11px;height:11px;border:1px solid #919191;border-radius:2px;background:linear-gradient(#fff 55%,#e2e2e2)"></div>
<div class="a" style="left:9px;top:531px;width:7px;height:1px;background:#3b4ea0"></div>
<div class="a" style="left:12px;top:528px;width:1px;height:7px;background:#3b4ea0"></div>
<svg class="a" style="left:28px;top:523px" width="18" height="15" viewBox="0 0 18 15">
<rect x="0" y="0" width="18" height="15" fill="#08395a"/>
<rect x="1" y="1" width="16" height="13" fill="url(#fg)"/>
<rect x="2" y="2" width="14" height="1" fill="#2b6f96"/><rect x="2" y="4" width="14" height="1" fill="#2b6f96"/>
<circle cx="5" cy="10" r="2.9" fill="#08395a"/><rect x="3" y="10" width="4" height="5" fill="#08395a"/>
<circle cx="13" cy="10" r="2.9" fill="#08395a"/><rect x="11" y="10" width="4" height="5" fill="#08395a"/>
<circle cx="5" cy="10" r="1.8" fill="#fff"/><rect x="4" y="10" width="2" height="5" fill="#fff"/>
<circle cx="13" cy="10" r="1.8" fill="#fff"/><rect x="12" y="10" width="2" height="5" fill="#fff"/>
</svg>
<div class="tr" style="left:53px;top:526px">Starter</div>
<div class="a" style="left:13px;top:551px;width:15px;height:1px;background:repeating-linear-gradient(to right,#a0a0a0 0 1px,transparent 1px 2px)"></div>
<div class="a" style="left:7px;top:546px;width:11px;height:11px;border:1px solid #919191;border-radius:2px;background:linear-gradient(#fff 55%,#e2e2e2)"></div>
<div class="a" style="left:9px;top:551px;width:7px;height:1px;background:#3b4ea0"></div>
<div class="a" style="left:12px;top:548px;width:1px;height:7px;background:#3b4ea0"></div>
<svg class="a" style="left:28px;top:543px" width="18" height="15" viewBox="0 0 18 15">
<rect x="0" y="0" width="18" height="15" fill="#08395a"/>
<rect x="1" y="1" width="16" height="13" fill="url(#fg)"/>
<rect x="2" y="2" width="14" height="1" fill="#2b6f96"/><rect x="2" y="4" width="14" height="1" fill="#2b6f96"/>
<circle cx="5" cy="10" r="2.9" fill="#08395a"/><rect x="3" y="10" width="4" height="5" fill="#08395a"/>
<circle cx="13" cy="10" r="2.9" fill="#08395a"/><rect x="11" y="10" width="4" height="5" fill="#08395a"/>
<circle cx="5" cy="10" r="1.8" fill="#fff"/><rect x="4" y="10" width="2" height="5" fill="#fff"/>
<circle cx="13" cy="10" r="1.8" fill="#fff"/><rect x="12" y="10" width="2" height="5" fill="#fff"/>
</svg>
<div class="tr" style="left:53px;top:546px">Terminals</div>
<div class="a" style="left:0;top:547px;width:344px;height:1px;background:#fff"></div>
<div class="a" style="left:324px;top:0;width:20px;height:548px;background:#f0f0f0"></div>
<div class="a" style="left:331px;top:186px;width:6px;height:278px;background:#868686"></div>
</div>
<div class="a" style="left:349px;top:165px;width:1px;height:582px;background:#8c8c8c"></div>
<div class="a" style="left:350px;top:165px;width:1px;height:582px;background:#6b6b6b"></div>
<div class="a" style="left:351px;top:166px;width:1px;height:581px;background:#fbfbfb"></div>
<div class="a" style="left:352px;top:166px;width:2px;height:581px;background:#e9e9e9"></div>
<div class="a" style="left:354px;top:165px;width:1px;height:582px;background:#f8f8f8"></div>
<div class="a" style="left:349px;top:165px;width:5px;height:1px;background:#7a7a7a"></div>
<div class="a" style="left:355px;top:165px;width:897px;height:582px;background:#fff;border:1px solid #828790;overflow:hidden">
<div class="th" style="left:13px;top:-12px"><svg width="125" height="125" viewBox="0 0 125 125" fill="none" stroke="#000" stroke-width="1"><circle cx="63.5" cy="55.5" r="29"/><circle cx="78" cy="55" r="14.5"/><path d="M10.5 55.5L34.5 55.5"/><path d="M4.5 44V66M10.5 44V66"/><path d="M92.5 55.5L115.5 55.5"/><path d="M115.5 44V66M121.5 44V66"/><path d="M46 79L33.5 100.5H92.5L80 79"/><path d="M57.60 96.9V85.2L61.70 93.62L65.80 85.2V96.9" stroke="#1a1a1a" stroke-width="1.45" stroke-linejoin="miter"/></svg></div>
<div class="pl" style="left:13px;top:119px">Pump</div>
<div class="th" style="left:163px;top:-12px"><svg width="125" height="125" viewBox="0 0 125 125" fill="none" stroke="#000" stroke-width="1"><circle cx="62.5" cy="42.5" r="27.5"/><path d="M60.5 15.5L116 15.5"/><path d="M115.5 13V21M117.5 13V21"/><path d="M10.5 42.5L62.8 42.5"/><path d="M7.5 37V49M10.5 37V49"/><path d="M52.7 67.3L40.5 78.5H84.5L72.7 67.3"/><path d="M12.5 99V72.5H46.5"/><path d="M29.5 67V78M32.5 67V78"/><path d="M77 71.5H112.5V99"/><path d="M93.5 67V77M96.5 67V77"/><rect x="4.5" y="99.5" width="17.0" height="17.0"/><rect x="104.5" y="99.5" width="17.0" height="17.0"/><path d="M61 73.5H64M62.5 73.5V78" stroke="#7a6a9a"/></svg></div>
<div class="pl" style="left:163px;top:119px">Pump</div>
<div class="th" style="left:313px;top:-12px"><svg width="125" height="125" viewBox="0 0 125 125" fill="none" stroke="#000" stroke-width="1"><path d="M94.5 26.5H60C42 26.5 29 41 29.5 58.5C29.5 76 44 90 62 90.5C80 90.5 94.5 76 94.5 57Z"/><path d="M94.5 29.5L115.5 29.5"/><path d="M115.5 21V39M121.5 21V39"/><path d="M10.5 58.5L29.5 58.5"/><path d="M4.5 50V68M10.5 50V68"/><path d="M62 58.5C58 53 56 49 58 46.5C60 44 64 44 66 46.5C68 49 66 53 62 58.5C58 64 56 68 58 70.5C60 73 64 73 66 70.5C68 68 66 64 62 58.5Z"/><path d="M41.7 84.7L28.5 104.5H94.5L81.5 84.7"/><path d="M57.90 103.6V92.6L62.00 100.52L66.10 92.6V103.6" stroke="#1a1a1a" stroke-width="1.45" stroke-linejoin="miter"/></svg></div>
<div class="pl" style="left:313px;top:119px">Pump</div>
<div class="th" style="left:463px;top:-12px"><svg width="125" height="125" viewBox="0 0 125 125" fill="none" stroke="#000" stroke-width="1"><rect x="33.5" y="25.5" width="59.0" height="59.0"/><path d="M41 55.5L85.5 55.5"/><path d="M85.5 47L85.5 64"/><path d="M10.5 55.5L33.5 55.5"/><path d="M4.5 46V64M10.5 46V64"/><path d="M92.5 55.5L115.5 55.5"/><path d="M115.5 46V64M121.5 46V64"/><path d="M43.5 84.5L33.5 100.5H92.5L82.5 84.5"/><path d="M58.20 97.8V86.1L62.30 94.52L66.40 86.1V97.8" stroke="#1a1a1a" stroke-width="1.45" stroke-linejoin="miter"/></svg></div>
<div class="pl" style="left:463px;top:119px">Pump</div>
<div class="th" style="left:613px;top:-12px"><svg width="125" height="125" viewBox="0 0 125 125" fill="none" stroke="#000" stroke-width="1"><circle cx="62.8" cy="25.5" r="21.8"/><path d="M57.50 33.3V19.0L62.50 29.30L67.50 19.0V33.3" stroke="#1a1a1a" stroke-width="1.6" stroke-linejoin="miter"/><path d="M58.5 47.3L58.5 72.8"/><path d="M67.5 47.3L67.5 72.8"/><circle cx="62.8" cy="97.1" r="24.3"/><path d="M16.5 97.5L63.5 97.5"/><path d="M10.5 89V105M16.5 89V105"/><path d="M87.2 97.5L109.5 97.5"/><path d="M109.5 89V105M115.5 89V105"/></svg></div>
<div class="pl" style="left:613px;top:119px">Pump</div>
<div class="th" style="left:13px;top:163px"><svg width="125" height="125" viewBox="0 0 125 125" fill="none" stroke="#000" stroke-width="1"><circle cx="63.5" cy="60.5" r="29"/><path d="M10.5 60.5L63.5 60.5"/><path d="M4.5 50V71M9.5 50V71"/><path d="M58.5 31.5L115.5 31.5"/><path d="M115.5 22V40M121.5 22V40"/><path d="M46 83L30.5 103.5H95.5L80.5 83"/><path d="M57.90 101.6V90.2L62.00 98.41L66.10 90.2V101.6" stroke="#1a1a1a" stroke-width="1.45" stroke-linejoin="miter"/></svg></div>
<div class="pl" style="left:13px;top:294px">Pump</div>
<div class="th" style="left:163px;top:163px"><svg width="125" height="125" viewBox="0 0 125 125" fill="none" stroke="#000" stroke-width="1"><rect x="4.5" y="59.5" width="85.0" height="28.0"/><path d="M14.5 40L14.5 59.5"/><path d="M9.5 38.5H19.5M9.5 40.5H19.5"/><path d="M64.5 40L64.5 59.5"/><path d="M59.5 38.5H69.5M59.5 40.5H69.5"/><path d="M89.5 71.5L100.5 71.5"/><path d="M89.5 75.5L100.5 75.5"/><circle cx="110.7" cy="73" r="10.5"/><path d="M106.75 77.5V68.5L110.00 74.98L113.25 68.5V77.5" stroke="#1a1a1a" stroke-width="1.3" stroke-linejoin="miter"/></svg></div>
<div class="pl" style="left:163px;top:294px">Pump</div>
<div class="th" style="left:313px;top:163px"><svg width="125" height="125" viewBox="0 0 125 125" fill="none" stroke="#000" stroke-width="1"><circle cx="63.5" cy="55.5" r="29"/><circle cx="78" cy="55" r="14.5"/><path d="M10.5 55.5L34.5 55.5"/><path d="M4.5 44V66M10.5 44V66"/><path d="M92.5 55.5L115.5 55.5"/><path d="M115.5 44V66M121.5 44V66"/><path d="M46 79L33.5 100.5H92.5L80 79"/><path d="M59.40 96.9V85.2L63.50 93.62L67.60 85.2V96.9" stroke="#1a1a1a" stroke-width="1.45" stroke-linejoin="miter"/></svg></div>
<div class="pl" style="left:313px;top:294px">Pump</div>
<div class="th" style="left:463px;top:163px"><svg width="125" height="125" viewBox="0 0 125 125" fill="none" stroke="#000" stroke-width="1"><rect x="4.5" y="64.5" width="117.0" height="36.0"/><path d="M47.3 43.5H78.4A22.3 20.7 0 0 1 78.4 84.9H47.3A22.3 20.7 0 0 1 47.3 43.5Z"/><circle cx="46.85" cy="64.9" r="16"/><circle cx="78.7" cy="64.9" r="15.8"/><path d="M47.5 29.5L47.5 92.5"/><path d="M78.5 29.5L78.5 92.5"/><path d="M39.5 25.5H54.5M39.5 29.5H54.5"/><path d="M70.5 25.5H86.5M70.5 29.5H86.5"/></svg></div>
<div class="pl" style="left:463px;top:294px">Pump</div>
<div class="th" style="left:613px;top:163px"><svg width="125" height="125" viewBox="0 0 125 125" fill="none" stroke="#000" stroke-width="1"><rect x="33.5" y="25.5" width="59.0" height="59.0"/><circle cx="63" cy="55.3" r="21.3"/><path d="M41.5 55.5L84.5 55.5"/><path d="M63.5 34L63.5 76.5"/><path d="M10.5 55.5L33.5 55.5"/><path d="M4.5 44V66M10.5 44V66"/><path d="M92.5 55.5L115.5 55.5"/><path d="M115.5 44V66M121.5 44V66"/><path d="M43.5 84.5L33.5 100.5H92.5L82.5 84.5"/><path d="M53.20 96.5V85L57.30 93.28L61.40 85V96.5" stroke="#1a1a1a" stroke-width="1.45" stroke-linejoin="miter"/></svg></div>
<div class="pl" style="left:613px;top:294px">Pump</div>
<div class="th" style="left:13px;top:338px"><svg width="125" height="125" viewBox="0 0 125 125" fill="none" stroke="#000" stroke-width="1"><circle cx="75" cy="70.5" r="32.3"/><path d="M15 70.5L74.7 70.5"/><path d="M9.5 61V79.5M15.5 61V79.5"/><path d="M107.5 70.5L107.5 10.5"/><path d="M98.5 4.5H116.5M98.5 10.5H116.5"/><path d="M56.5 97.5L42.5 121.5H107.5L93.5 97.5"/><path d="M71.10 117.4V105.6L75.60 114.10L80.10 105.6V117.4" stroke="#1a1a1a" stroke-width="1.45" stroke-linejoin="miter"/></svg></div>
<div class="pl" style="left:13px;top:469px">Pump</div>
<div class="th" style="left:163px;top:338px"><svg width="125" height="125" viewBox="0 0 125 125" fill="none" stroke="#000" stroke-width="1"><circle cx="63.3" cy="40.4" r="16"/><path d="M63.3 24.5L94 24.5"/><path d="M92.5 18V31M95.5 18V31"/><path d="M33.5 40.5L63.7 40.5"/><path d="M30.5 34V47M33.5 34V47"/><path d="M53.8 53.8L46.5 65.5H79.5L72.4 53.8"/><path d="M13.5 89.5V60.5H49"/><path d="M30.5 54.5V67M33.5 54.5V67"/><path d="M76 60.5H112.5V89.5"/><path d="M92.5 54.5V67M95.5 54.5V67"/><rect x="4.5" y="89.5" width="18.0" height="18.0"/><rect x="103.5" y="89.5" width="18.0" height="18.0"/><path d="M62.5 57V62.5" stroke="#8a9ac0"/></svg></div>
<div class="pl" style="left:163px;top:469px">Pump</div>
<div class="th" style="left:313px;top:338px"><svg width="125" height="125" viewBox="0 0 125 125" fill="none" stroke="#000" stroke-width="1"><path d="M96.5 22.5H60C42 22.5 29 38 29.5 56.5C29.5 74 45 89.5 63 89.5C81 89.5 96.5 75 96.5 58.5Z"/><path d="M96.5 36.5L115.5 36.5"/><path d="M115.5 27V46M121.5 27V46"/><path d="M10.5 56.5L29.5 56.5"/><path d="M4.5 47V66M9.5 47V66"/><path d="M63 56.5C59 51 57 47 59 44C61 41.5 65 41.5 67 44C69 47 67 51 63 56.5C59 62 57 66 59 68.5C61 71 65 71 67 68.5C69 66 67 62 63 56.5Z"/><path d="M42.5 83L29.5 103.5H96.5L83 83"/><path d="M53.25 100.9V90.8L57.00 98.07L60.75 90.8V100.9" stroke="#1a1a1a" stroke-width="1.5" stroke-linejoin="miter"/></svg></div>
<div class="pl" style="left:313px;top:469px">Pump</div>
<div class="th" style="left:463px;top:338px"><svg width="125" height="125" viewBox="0 0 125 125" fill="none" stroke="#000" stroke-width="1"><rect x="33.5" y="25.5" width="59.0" height="59.0"/><path d="M41 55.5L85.5 55.5"/><path d="M85.5 47L85.5 64"/><path d="M10.5 55.5L33.5 55.5"/><path d="M4.5 46V64M10.5 46V64"/><path d="M92.5 55.5L115.5 55.5"/><path d="M115.5 46V64M121.5 46V64"/><path d="M43.5 84.5L33.5 100.5H92.5L82.5 84.5"/><path d="M53.20 97.8V86.1L57.30 94.52L61.40 86.1V97.8" stroke="#1a1a1a" stroke-width="1.45" stroke-linejoin="miter"/></svg></div>
<div class="pl" style="left:463px;top:469px">Pump</div>
<div class="th" style="left:613px;top:338px"><svg width="125" height="125" viewBox="0 0 125 125" fill="none" stroke="#000" stroke-width="1"><circle cx="62.8" cy="26" r="22"/><path d="M57.50 33.8V19.5L62.50 29.80L67.50 19.5V33.8" stroke="#1a1a1a" stroke-width="1.6" stroke-linejoin="miter"/><path d="M58.5 48L58.5 72.8"/><path d="M67.5 48L67.5 72.8"/><circle cx="62.8" cy="97.1" r="24.3"/><path d="M19.5 97.5L63.5 97.5"/><path d="M14.5 89V105M19.5 89V105"/><path d="M87.2 97.5L106.5 97.5"/><path d="M106.5 89V105M111.5 89V105"/></svg></div>
<div class="pl" style="left:613px;top:469px">Pump</div>
<div class="th" style="left:13px;top:513px"><svg width="125" height="125" viewBox="0 0 125 125" fill="none" stroke="#000" stroke-width="1"><circle cx="63.5" cy="60.5" r="29"/><path d="M10.5 60.5L63.5 60.5"/><path d="M4.5 50V71M9.5 50V71"/><path d="M58.5 31.5L115.5 31.5"/><path d="M115.5 22V40M121.5 22V40"/><path d="M46 83L30.5 103.5H95.5L80.5 83"/><path d="M57.90 101.6V90.2L62.00 98.41L66.10 90.2V101.6" stroke="#1a1a1a" stroke-width="1.45" stroke-linejoin="miter"/></svg></div>
<div class="pl" style="left:13px;top:644px">Pump</div>
<div class="th" style="left:163px;top:513px"><svg width="125" height="125" viewBox="0 0 125 125" fill="none" stroke="#000" stroke-width="1"><path d="M17.5 38.5L17.5 64.5"/><path d="M12 35.5H23M12 38.5H23"/><path d="M69.5 38.5L69.5 64.5"/><path d="M64 35.5H75M64 38.5H75"/><rect x="4.5" y="64.5" width="78.0" height="25.5"/><circle cx="108" cy="75.5" r="10"/></svg></div>
<div class="pl" style="left:163px;top:644px">Pump</div>
<div class="th" style="left:313px;top:513px"><svg width="125" height="125" viewBox="0 0 125 125" fill="none" stroke="#000" stroke-width="1"><circle cx="63" cy="21" r="17"/><path d="M49.5 21.5L76.5 21.5"/><path d="M76.5 18L76.5 24.5"/><path d="M31 21.5L46 21.5"/><path d="M28.5 15V29M31.5 15V29"/><path d="M80 21.5L94.5 21.5"/><path d="M94.5 15V29M97.5 15V29"/><path d="M59.5 38L59.5 56.5"/><path d="M66.5 38L66.5 56.5"/><rect x="47.5" y="56.5" width="31.0" height="33.5"/></svg></div>
<div class="pl" style="left:313px;top:644px">Pump</div>
<div class="th" style="left:463px;top:513px"><svg width="125" height="125" viewBox="0 0 125 125" fill="none" stroke="#000" stroke-width="1"><circle cx="63" cy="63" r="58.5"/><path d="M63 4.5L121 62.5"/><path d="M13.9 32.5Q52 58 92.6 33.7"/></svg></div>
<div class="pl" style="left:463px;top:644px">Pump</div>
<div class="th" style="left:613px;top:513px"><svg width="125" height="125" viewBox="0 0 125 125" fill="none" stroke="#000" stroke-width="1"><circle cx="63" cy="63" r="58.5"/><path d="M62.8 4.6L121 63"/><path d="M24.5 66C25 58 29 53 34 53C40 53 43.5 58 44.5 66"/><path d="M62.5 66C63 58 67 53 72 53C78 53 81.5 58 82.5 66"/></svg></div>
<div class="pl" style="left:613px;top:644px">Pump</div>
<div class="a" style="left:0;top:0;width:895px;height:1px;background:#fff"></div>
<div class="a" style="left:0;top:579px;width:895px;height:1px;background:#fff"></div>
<div class="a" style="left:874px;top:1px;width:20px;height:578px;background:#f0f0f0"></div>
<div class="a" style="left:881px;top:316px;width:6px;height:74px;background:#868686"></div>
</div>
<div class="a" style="left:3px;top:754px;width:974px;height:26px;border:1px solid #fcfcfc;border-bottom:none;background:#efefef"></div>
<div class="a" style="left:2px;top:780px;width:976px;height:1px;background:#6d6d6d"></div>
<div class="a" style="left:2px;top:753px;width:1px;height:1px;background:#555"></div>
<div class="a" style="left:977px;top:753px;width:1px;height:1px;background:#555"></div>
<div class="t" style="left:8px;top:758px;font-size:13.2px;color:#000">116 element(s)</div>
<div class="a" style="left:985px;top:754px;width:129px;height:26px;border:1px solid #e6e6e6;border-radius:4px;background:#f7f7f7"></div>
<div class="t" style="left:1030px;top:761px;font-size:13.8px;color:#8c8c8c">Select</div>
<div class="a" style="left:1122px;top:754px;width:129px;height:26px;border:1px solid #d3d3d3;border-bottom-color:#b5b5b5;border-radius:4px;background:#fdfdfd"></div>
<div class="t" style="left:1170px;top:761px;font-size:13.3px;color:#000">Close</div>
</div></body></html>
